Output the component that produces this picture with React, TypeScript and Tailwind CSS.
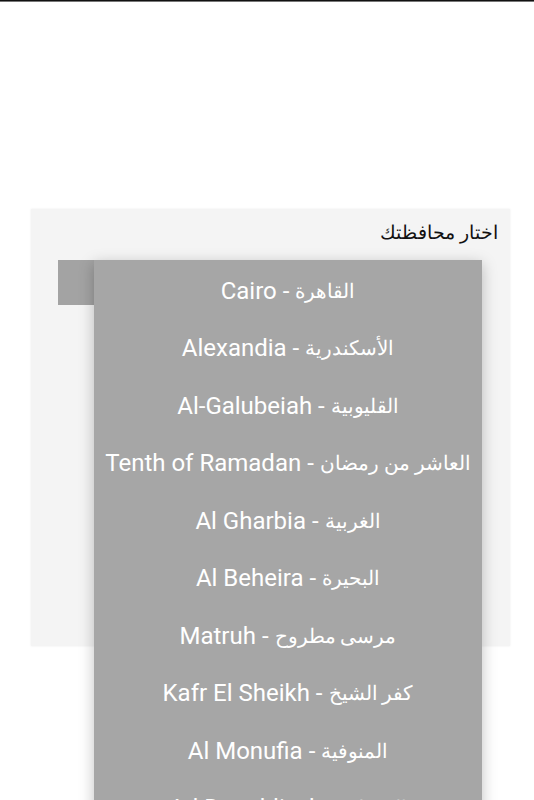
import React from 'react'

const cities = [
  ['Cairo', 'القاهرة'],
  ['Alexandia', 'الأسكندرية'],
  ['Al-Galubeiah', 'القليوبية'],
  ['Tenth of Ramadan', 'العاشر من رمضان'],
  ['Al Gharbia', 'الغربية'],
  ['Al Beheira', 'البحيرة'],
  ['Matruh', 'مرسى مطروح'],
  ['Kafr El Sheikh', 'كفر الشيخ'],
  ['Al Monufia', 'المنوفية'],
  ['Ad Daqahliyah', 'الدقهلية'],
]

export default function App() {
  return (
    <div className="relative w-[534px] h-[800px] overflow-hidden bg-white font-['Roboto','Noto_Sans',sans-serif]">
      <div className="h-[1px] bg-[#111]" />
      <div className="h-[1px] bg-[#777]" />

      <div className="mt-[207px] mx-[31px] w-[479px] h-[437px] bg-[#f4f4f4] shadow-[0_0_2px_rgba(0,0,0,0.08)]">
        <div className="flex justify-end pr-[12px] pt-[12px] h-[51px]">
          <span dir="rtl" className="text-[19px] leading-[24px] text-[#111]">
            اختار محافظتك
          </span>
        </div>
        <div className="ml-[27px] w-[424px] h-[45px] bg-[#a3a3a3]" />
      </div>

      <div className="absolute left-[94px] top-[260px] w-[388px] h-[600px] bg-[#a6a6a6] shadow-[0_4px_14px_rgba(0,0,0,0.25)]">
        {cities.map(([en, ar]) => (
          <div
            key={en}
            className="h-[57.5px] pt-[4px] flex items-center justify-center text-white leading-none whitespace-nowrap"
          >
            <span className="text-[24px]">{en} - </span>
            <span className="text-[20px] ml-[6px]">{ar}</span>
          </div>
        ))}
      </div>
    </div>
  )
}
